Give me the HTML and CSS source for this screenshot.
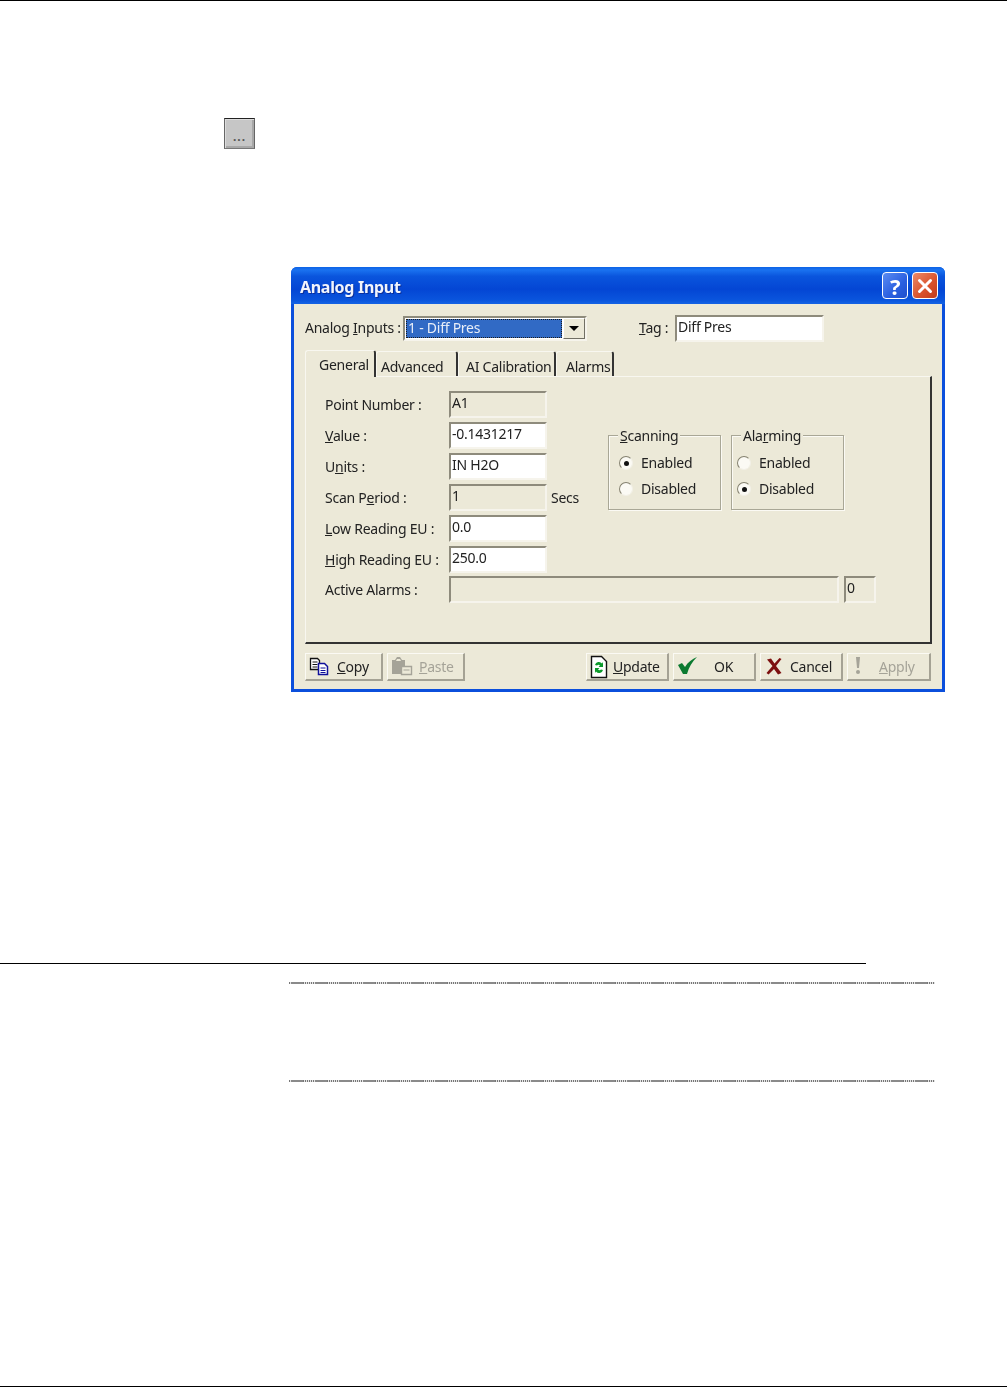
FILE: index.html
```html
<!DOCTYPE html>
<html lang="en">
<head>
  <meta charset="UTF-8">
  <title>Analog Input</title>
  <link rel="stylesheet" href="styles.css">
</head>
<body>
  <div class="page">
    <div class="rule-top"></div>
    <div class="browse-btn"><span>...</span></div>

    <div class="dialog">
      <div class="titlebar">
        <span class="title">Analog Input</span>
        <div class="caption-btns">
          <div class="cap-btn cap-help">?</div>
          <div class="cap-btn cap-close">
            <svg width="18" height="18" viewBox="0 0 18 18"><path d="M3.500 3.500l11 11M14.500 3.500l-11 11" stroke="#fff" stroke-width="3" stroke-linecap="round"/></svg>
          </div>
        </div>
      </div>
      <div class="dialog-body">
        <div class="head-row">
          <span class="head-label">Analog <u>I</u>nputs :</span>
          <div class="combo">
            <span class="combo-text">1 - Diff Pres</span>
            <div class="combo-arrow"><i></i></div>
          </div>
          <span class="tag-label"><u>T</u>ag :</span>
          <div class="field tag-field white">Diff Pres</div>
        </div>

        <div class="tabs">
          <div class="tab tab-general active">General</div>
          <div class="tab tab-advanced">Advanced</div>
          <div class="tab tab-calib">AI Calibration</div>
          <div class="tab tab-alarms">Alarms</div>
        </div>
        <div class="panel">
          <div class="panel-top">
            <div class="fields">
              <span>Point Number :</span><div class="field">A1</div><span></span>
              <span><u>V</u>alue :</span><div class="field white">-0.1431217</div><span></span>
              <span>U<u>n</u>its :</span><div class="field white">IN H2O</div><span></span>
              <span>Scan P<u>e</u>riod :</span><div class="field">1</div><span>Secs</span>
              <span><u>L</u>ow Reading EU :</span><div class="field white">0.0</div><span></span>
              <span><u>H</u>igh Reading EU :</span><div class="field white">250.0</div><span></span>
            </div>
            <div class="groups">
              <div class="group group-scan">
                <span class="legend"><u>S</u>canning</span>
                <div class="radio-row"><span class="radio on"></span>Enabled</div>
                <div class="radio-row"><span class="radio"></span>Disabled</div>
              </div>
              <div class="group group-alarm">
                <span class="legend">Ala<u>r</u>ming</span>
                <div class="radio-row"><span class="radio"></span>Enabled</div>
                <div class="radio-row"><span class="radio on"></span>Disabled</div>
              </div>
            </div>
          </div>
          <div class="alarm-row">
            <span class="alarm-label">Active Alarms :</span>
            <div class="field alarm-list"></div>
            <div class="field alarm-count">0</div>
          </div>
        </div>

        <div class="btn-row">
          <div class="btn btn-copy">
            <svg width="22" height="20" viewBox="0 0 22 20"><path d="M1.500 2.500h7l2 2v9h-9z" fill="#fff" stroke="#111" stroke-width="1.300"/><path d="M3.500 6h5M3.500 8.500h5M3.500 11h5" stroke="#111"/><path d="M9.500 7.500h6l3 3v8h-9z" fill="#fff" stroke="#10109a" stroke-width="1.500"/><path d="M11.500 12h5M11.500 14.500h5M11.500 16.500h5" stroke="#10109a"/></svg>
            <span><u>C</u>opy</span>
          </div>
          <div class="btn btn-paste off">
            <svg width="22" height="20" viewBox="0 0 22 20"><path d="M1 4h3l2-3h3l2 3h3v14H1z" fill="#a5a398"/><path d="M6 3h3l1 2H5z" fill="#ece9d8"/><path d="M10.500 10.500h10v8h-10z" fill="#ece9d8" stroke="#a5a398" stroke-width="1.400"/><path d="M12.500 14h6" stroke="#a5a398"/></svg>
            <span><u>P</u>aste</span>
          </div>
          <div class="btn-spacer"></div>
          <div class="btn btn-update">
            <svg width="18" height="24" viewBox="0 0 18 24"><path d="M1.500 1.500h10l5 5v16h-15z" fill="#fff" stroke="#111" stroke-width="1.400"/><path d="M5 10a4 4 0 0 1 7-1.500l1-1.500v5h-4.500l1.500-1.500a2.200 2.200 0 0 0-3 0z" fill="#0c9a2c"/><path d="M13 15a4 4 0 0 1-7 1.500L5 18v-5h4.500L8 14.500a2.200 2.200 0 0 0 3 0z" fill="#0c9a2c"/></svg>
            <span><u>U</u>pdate</span>
          </div>
          <div class="btn btn-ok">
            <svg width="22" height="20" viewBox="0 0 22 20"><path d="M1 9l4-2 3 4C11 6 15 3 20 1c-5 5-8 10-10 17H6z" fill="#0b7a30"/></svg>
            <span class="ok-text">OK</span>
          </div>
          <div class="btn btn-cancel">
            <svg width="18" height="18" viewBox="0 0 18 18"><path d="M2 2.500l4-1 3.500 5 5-5.500 2 1-5.500 7 5.500 7-3.500 1.500-4-5.500-5.500 5.500-2-1.500 6-7z" fill="#7d1010"/></svg>
            <span>Cancel</span>
          </div>
          <div class="btn btn-apply off">
            <svg width="8" height="20" viewBox="0 0 8 20"><path d="M2 1h4l-1 11H3z" fill="#a5a398"/><circle cx="4" cy="16" r="2" fill="#a5a398"/></svg>
            <span><u>A</u>pply</span>
          </div>
        </div>
      </div>
    </div>

    <div class="rule-section"></div>
    <div class="rule-dotted first"></div>
    <div class="rule-dotted second"></div>
    <div class="page-fill"></div>
    <div class="rule-bottom"></div>
  </div>
</body>
</html>
```

FILE: styles.css
```css
html, body {
  margin: 0;
  background: #fff;
}
.page {
  width: 1007px;
  height: 1388px;
  display: flex;
  flex-direction: column;
  overflow: hidden;
  font-family: "Noto Sans", Tahoma, sans-serif;
}
.rule-top {
  height: 1px;
  background: #000;
}
.browse-btn {
  width: 29px;
  height: 29px;
  margin: 117px 0 0 224px;
  background: #c6c6c6;
  border: 1px solid;
  border-color: #222 #666 #777 #666;
  box-shadow: inset 1px 1px 0 #dcdcdc, inset -2px -2px 0 #a8a8a8;
  display: flex;
  align-items: center;
  justify-content: center;
  color: #555;
  font-size: 12px;
  font-weight: 700;
  letter-spacing: 1px;
  line-height: 1;
}
.browse-btn span {
  margin-top: 6px;
}

/* dialog */
.dialog {
  width: 654px;
  height: 425px;
  box-sizing: border-box;
  margin: 118px 0 0 291px;
  background: #0b4fdc;
  border-radius: 6px 6px 0 0;
  padding: 0 3px 3px;
  display: flex;
  flex-direction: column;
  filter: blur(0.35px);
  color: #222;
  font-size: 14px;
  letter-spacing: -0.25px;
}
.titlebar {
  height: 37px;
  flex: none;
  margin: 0 -3px;
  padding: 0 7px 0 9px;
  display: flex;
  align-items: center;
  justify-content: space-between;
  border-radius: 6px 6px 0 0;
  background: linear-gradient(#0d63e6 0, #1a72f0 8%, #0a55dd 25%, #0446d4 60%, #0a55dd 90%, #1463e4 100%);
}
.title {
  color: #f2f5fc;
  font-size: 16px;
  font-weight: 700;
  letter-spacing: -0.3px;
  padding-top: 3px;
  text-shadow: 1px 1px 0 #0a2f9c;
}
.caption-btns {
  display: flex;
  gap: 4px;
}
.cap-btn {
  width: 24px;
  height: 25px;
  border: 1px solid #fff;
  border-radius: 4px;
  display: flex;
  align-items: center;
  justify-content: center;
  color: #fff;
  font-size: 22px;
  font-weight: 700;
  line-height: 1;
}
.cap-help {
  background: linear-gradient(135deg, #5a8cf2, #2a5fe0 60%, #1f4fcc);
}
.cap-close {
  background: linear-gradient(135deg, #ec8a68, #d9512b 60%, #c23c1c);
}
.dialog-body {
  flex: 1;
  background: #ece9d8;
  padding: 11px 0 0 11px;
  display: flex;
  flex-direction: column;
}

.head-row {
  display: flex;
  align-items: center;
  height: 27px;
}
.head-label {
  width: 98px;
  white-space: nowrap;
  padding-bottom: 2px;
}
.combo {
  width: 184px;
  height: 25px;
  box-sizing: border-box;
  border: 2px solid;
  border-color: #8e8b7c #f6f4ec #f6f4ec #8e8b7c;
  background: #fff;
  display: flex;
  align-items: stretch;
}
.combo-text {
  flex: 1;
  margin: 1px;
  padding-left: 2px;
  background: #316ac5;
  outline: 1px dotted #1c1c1c;
  outline-offset: -1px;
  color: #e8eef8;
  line-height: 17px;
}
.combo-arrow {
  width: 20px;
  border: 1px solid;
  border-color: #fff #716f64 #716f64 #fff;
  background: #ece9d8;
  display: flex;
  align-items: center;
  justify-content: center;
}
.combo-arrow i {
  width: 0;
  height: 0;
  border-style: solid;
  border-width: 5px 5px 0;
  border-color: #000 transparent transparent;
}
.tag-label {
  width: 36px;
  margin-left: 52px;
  white-space: nowrap;
  padding-bottom: 2px;
}

/* inset boxes */
.field {
  height: 27px;
  box-sizing: border-box;
  border: 2px solid;
  border-color: #8e8b7c #f6f4ec #f6f4ec #8e8b7c;
  padding-left: 1px;
  line-height: 20px;
  white-space: nowrap;
  color: #222;
}
.field.white {
  background: #fff;
}
.tag-field {
  width: 149px;
}

/* tabs */
.tabs {
  display: flex;
  height: 26px;
  margin-top: 8px;
  position: relative;
  z-index: 1;
}
.tab {
  box-sizing: border-box;
  height: 25px;
  margin-top: 1px;
  border-top: 1px solid #f8f7f0;
  border-left: 1px solid #f8f7f0;
  border-right: 2px solid #333;
  border-radius: 3px 3px 0 0;
  line-height: 29px;
}
.tab.active {
  height: 27px;
  margin-top: 0;
  line-height: 28px;
  background: #ece9d8;
}
.tab-general { width: 71px; padding-left: 13px; }
.tab-advanced { width: 82px; padding-left: 4px; }
.tab-calib { width: 98px; padding-left: 7px; }
.tab-alarms { width: 58px; padding-left: 9px; }

.panel {
  width: 627px;
  height: 268px;
  box-sizing: border-box;
  border-style: solid;
  border-color: #f8f7f0 #333 #333 #f8f7f0;
  border-width: 1px 2px 2px 1px;
  padding: 14px 0 0 19px;
}
.panel-top {
  display: flex;
}
.fields {
  display: grid;
  grid-template-columns: 124px 98px 56px;
  grid-auto-rows: 27px;
  row-gap: 4px;
  align-items: center;
  white-space: nowrap;
  height: 182px;
}
.fields > span:nth-child(3n) {
  padding-left: 4px;
}
.groups {
  display: flex;
  gap: 10px;
  margin-top: 44px;
  margin-left: 5px;
}
.group {
  width: 113px;
  height: 75px;
  box-sizing: border-box;
  border: 1px solid #a9a796;
  box-shadow: 1px 1px 0 #fbfaf4, inset 1px 1px 0 #fbfaf4;
  padding: 13px 0 0 10px;
  position: relative;
}
.group-alarm {
  padding-left: 5px;
}
.legend {
  position: absolute;
  top: -10px;
  left: 9px;
  padding: 0 2px;
  background: #ece9d8;
}
.radio-row {
  height: 26px;
  display: flex;
  align-items: center;
  gap: 8px;
  white-space: nowrap;
}
.radio {
  width: 14px;
  height: 14px;
  box-sizing: border-box;
  margin-top: 2px;
  border-radius: 50%;
  border: 1px solid;
  border-color: #858270 #f2f0e6 #f2f0e6 #858270;
  background: #fbfaf4;
  display: flex;
  align-items: center;
  justify-content: center;
}
.radio.on::after {
  content: "";
  width: 5px;
  height: 5px;
  border-radius: 50%;
  background: #111;
}
.alarm-row {
  display: flex;
  align-items: center;
  margin-top: 3px;
}
.alarm-label {
  width: 124px;
  white-space: nowrap;
}
.alarm-list {
  width: 390px;
}
.alarm-count {
  width: 32px;
  margin-left: 5px;
}

/* bottom buttons */
.btn-row {
  display: flex;
  gap: 4px;
  margin-top: 9px;
  width: 626px;
}
.btn {
  height: 28px;
  box-sizing: border-box;
  border-style: solid;
  border-color: #fbfaf4 #a5a294 #a5a294 #fbfaf4;
  border-width: 1px 2px 2px 1px;
  display: flex;
  align-items: center;
  gap: 6px;
  padding-left: 3px;
  white-space: nowrap;
}
.btn svg {
  margin-bottom: 2px;
}
.btn.off {
  color: #a5a398;
}
.btn-copy, .btn-paste { width: 78px; }
.btn-spacer { flex: 1; }
.btn-update { width: 83px; gap: 5px; padding-left: 3px; }
.btn-update svg { margin-bottom: 0; }
.btn-ok { width: 83px; }
.ok-text { margin-left: 9px; }
.btn-cancel { width: 83px; padding-left: 4px; gap: 7px; }
.btn-apply { width: 84px; padding-left: 6px; gap: 17px; }

/* page rules */
.rule-section {
  width: 866px;
  height: 1px;
  margin-top: 271px;
  background: #000;
}
.rule-dotted {
  width: 646px;
  height: 2px;
  margin-left: 289px;
  background-image:
    repeating-linear-gradient(90deg, transparent 0 2px, #8a8a8a 2px 14px, transparent 14px 24px),
    repeating-linear-gradient(90deg, #777 0 1px, #e4e4e4 1px 2px);
}
.rule-dotted.first { margin-top: 18px; }
.rule-dotted.second { margin-top: 96px; }
.page-fill { flex: 1; }
.rule-bottom {
  height: 1px;
  margin-bottom: 1px;
  background: #000;
}
```
